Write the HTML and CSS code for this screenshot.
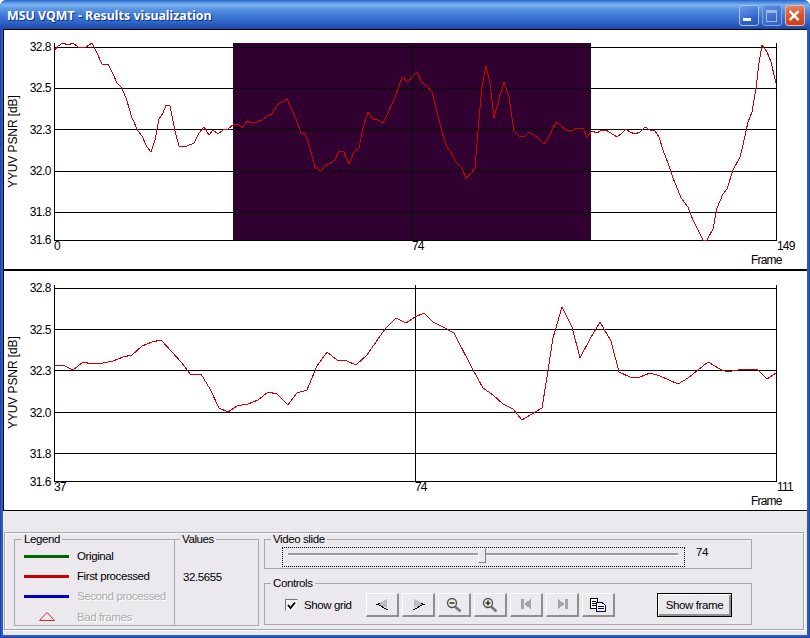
FILE: index.html
```html
<!DOCTYPE html>
<html lang="en">
<head>
<meta charset="utf-8">
<title>MSU VQMT - Results visualization</title>
<link rel="stylesheet" href="styles.css">
</head>
<body>
<div class="window">
  <header class="titlebar">
    <span class="title">MSU VQMT - Results visualization</span>
    <div class="caption-buttons">
      <span class="cap cap-min"><i class="min-bar"></i></span>
      <span class="cap cap-max"><i class="max-box"></i></span>
      <span class="cap cap-close">
        <svg width="20" height="21" viewBox="0 0 20 21"><path d="M5 5.5 L15 15.5 M15 5.5 L5 15.5" class="close-x"/></svg>
      </span>
    </div>
  </header>
  <main class="charts">
    <svg class="chart" width="803" height="239" viewBox="4 30 803 239" shape-rendering="crispEdges">
      <rect class="sel" x="233" y="43" width="358" height="197.5"/>
      <path class="axis" d="M54 47.5H776 M54 88.5H776 M54 129.5H776 M54 171.5H776 M54 212.5H776 M54 240.5H777 M54.5 43V241 M776.5 43V241 M412.5 43V241"/>
      <polyline class="curve" points="54,51 58,46 63,43 68,45 73,43 78,47 86,47 92,43 97,53 102,64 108,64 113,74 117,83 122,88 127,101 132,118 138,131 142,136 147,147 151,152 155,140 159,119 163,113 166,105 170,106 175,131 179,146 187,146 194,143 199,133 204,127 209,135 213,130 218,134 223,130 228,129 234,124 238,124 242,128 247,121 252,123 257,122 262,120 267,116 272,114 277,105 282,102 287,99 296,119 301,133 305,133 310,148 315,167 321,171 325,166 330,163 335,160 339,151 344,152 349,164 354,152 359,148 363,128 368,112 373,119 378,120 383,123 388,113 393,102 398,89 402,77 408,82 412,77 417,72 422,83 427,86 432,92 437,112 442,132 447,147 452,154 456,162 462,168 466,179 471,173 475,168 478,130 482,87 486,66 490,83 494,118 499,99 504,82 509,97 514,131 519,136 524,137 529,132 534,135 539,139 544,144 549,137 553,128 557,122 562,127 568,131 573,130 577,128 583,128 587,137 592,131 597,133 602,130 606,130 617,137 621,134 626,129 630,132 635,134 640,132 645,127 650,130 655,131 659,137 663,150 668,163 673,178 678,190 681,198 688,207 693,220 698,230 703,240 707,240 713,229 717,208 723,194 727,189 733,170 740,157 743,145 748,122 752,112 756,88 759,63 762,45 767,52 771,62 776,83"/>
      <g class="ticks">
        <text x="51" y="51">32.8</text>
        <text x="51" y="92">32.5</text>
        <text x="51" y="134">32.3</text>
        <text x="51" y="175">32.0</text>
        <text x="51" y="216">31.8</text>
        <text x="51" y="244">31.6</text>
      </g>
      <text class="ylabel" transform="translate(17 188) rotate(-90)">YYUV PSNR [dB]</text>
      <g class="xticks">
        <text x="54" y="250">0</text>
        <text x="412" y="250">74</text>
        <text x="777" y="250">149</text>
        <text x="751" y="264">Frame</text>
      </g>
    </svg>
    <div class="divider"></div>
    <svg class="chart" width="803" height="239" viewBox="4 271 803 239" shape-rendering="crispEdges">
      <path class="axis" d="M54 288.5H776 M54 329.5H776 M54 370.5H776 M54 412.5H776 M54 453.5H776 M54 481.5H777 M54.5 285V482 M776.5 285V482 M415.5 285V482"/>
      <polyline class="curve" points="54,365 63,365 73,370 83,362 92,364 103,363 113,361 123,357 132,355 142,346 152,342 161,340 172,352 182,363 190,374 201,374 210,389 219,408 228,412 237,406 248,404 258,400 268,392 277,394 288,405 297,393 307,390 317,366 327,352 337,360 347,361 356,365 367,355 385,329 396,318 406,323 415,317 424,313 433,322 443,327 454,333 472,368 483,388 493,395 503,404 513,409 522,420 530,415 542,408 547,377 553,338 562,307 572,327 580,358 590,339 600,322 611,341 619,372 630,377 640,377 650,373 660,376 678,384 688,378 698,370 708,362 720,369 727,372 743,369 757,369 767,379 776,373"/>
      <g class="ticks">
        <text x="51" y="292">32.8</text>
        <text x="51" y="334">32.5</text>
        <text x="51" y="375">32.3</text>
        <text x="51" y="417">32.0</text>
        <text x="51" y="458">31.8</text>
        <text x="51" y="486">31.6</text>
      </g>
      <text class="ylabel" transform="translate(17 429) rotate(-90)">YYUV PSNR [dB]</text>
      <g class="xticks">
        <text x="54" y="491">37</text>
        <text x="415" y="491">74</text>
        <text x="777" y="491">111</text>
        <text x="751" y="505">Frame</text>
      </g>
    </svg>
  </main>
  <section class="panel">
    <div class="outer-box">
      <fieldset class="group group-legend">
        <legend>Legend</legend>
        <div class="legend-row"><span class="swatch"><i class="line line-green"></i></span><span>Original</span></div>
        <div class="legend-row"><span class="swatch"><i class="line line-red"></i></span><span>First processed</span></div>
        <div class="legend-row disabled"><span class="swatch"><i class="line line-blue"></i></span><span>Second processed</span></div>
        <div class="legend-row disabled"><span class="swatch"><svg width="16" height="10" viewBox="0 0 16 10"><path class="tri" d="M8 .5 L15.5 8.5 H.5 Z"/></svg></span><span>Bad frames</span></div>
      </fieldset>
      <fieldset class="group group-values">
        <legend>Values</legend>
        <div class="value">32.5655</div>
      </fieldset>
      <div class="right-col">
        <fieldset class="group group-video">
          <legend>Video slide</legend>
          <div class="video-row">
            <div class="slider">
              <div class="track"></div>
              <div class="thumb"></div>
            </div>
            <span class="slide-value">74</span>
          </div>
        </fieldset>
        <fieldset class="group group-controls">
          <legend>Controls</legend>
          <div class="controls-row">
            <label class="check">
              <span class="box"><svg width="9" height="9" viewBox="0 0 9 9"><path class="tick" d="M1 4 L3.5 7 L8 1.5"/></svg></span>
              <span>Show grid</span>
            </label>
            <div class="tools">
              <button class="tool" type="button" aria-label="Previous">
                <svg width="13" height="11" viewBox="0 0 13 11" shape-rendering="crispEdges"><path class="arr-fill" d="M1 5 L11 0 V9 Z"/><path class="arr-edge" d="M0 5.5 H2 L11 10.5 H12 M2 4.5 H4"/></svg>
              </button>
              <button class="tool" type="button" aria-label="Next">
                <svg width="13" height="11" viewBox="0 0 13 11" shape-rendering="crispEdges"><path class="arr-fill" d="M12 5 L2 0 V9 Z"/><path class="arr-edge" d="M13 5.5 H11 L2 10.5 H1 M11 4.5 H9"/></svg>
              </button>
              <button class="tool" type="button" aria-label="Zoom out">
                <svg width="16" height="16" viewBox="0 0 16 16"><path class="mag-handle" d="M9 9.5 L14.5 14.5"/><circle class="mag" cx="6" cy="6" r="4.5"/><path class="mag-sign" d="M3.5 6 H8.5"/></svg>
              </button>
              <button class="tool" type="button" aria-label="Zoom in">
                <svg width="16" height="16" viewBox="0 0 16 16"><path class="mag-handle" d="M9 9.5 L14.5 14.5"/><circle class="mag" cx="6" cy="6" r="4.5"/><path class="mag-sign" d="M3.5 6 H8.5 M6 3.5 V8.5"/></svg>
              </button>
              <button class="tool" type="button" aria-label="First" disabled>
                <svg width="11" height="11" viewBox="0 0 11 11" shape-rendering="crispEdges"><path class="dis" d="M0 0 H3 V10 H0 Z M3 5 L10 0 V10 Z"/></svg>
              </button>
              <button class="tool" type="button" aria-label="Last" disabled>
                <svg width="11" height="11" viewBox="0 0 11 11" shape-rendering="crispEdges"><path class="dis" d="M8 0 H11 V10 H8 Z M8 5 L1 0 V10 Z"/></svg>
              </button>
              <button class="tool" type="button" aria-label="Copy">
                <svg width="16" height="14" viewBox="0 0 16 14" shape-rendering="crispEdges"><path class="doc-back" d="M.5 .5 H7.5 V10.5 H.5 Z"/><path class="doc-lines" d="M2 3.5 H6 M2 5.5 H6 M2 7.5 H6"/><path class="doc-front" d="M6.5 4.5 H12 L15.5 7.5 V13.5 H6.5 Z"/><path class="doc-lines-b" d="M8 8.5 H14 M8 10.5 H14"/></svg>
              </button>
            </div>
            <button class="show-frame" type="button">Show frame</button>
          </div>
        </fieldset>
      </div>
    </div>
  </section>
</div>
</body>
</html>
```
FILE: styles.css
```css
* { box-sizing: border-box; }
html, body { margin: 0; padding: 0; background: #fff; }
body { width: 810px; height: 638px; overflow: hidden; font: 11.5px/13px "Liberation Sans", Arial, sans-serif; letter-spacing: -0.4px; color: #000; }

.window {
  width: 810px; height: 638px;
  display: flex; flex-direction: column;
  background: #2a5cc4;
  border-radius: 7px 7px 0 0;
  overflow: hidden;
  padding: 0 3px 3px;
  box-shadow: inset 1px 0 #1c46a8, inset -1px 0 #1c46a8, inset 0 -1px #1c46a8;
}

.titlebar {
  flex: none; height: 29px;
  margin: 0 -3px;
  display: flex; align-items: flex-start;
  padding: 0 5px 0 7px;
  background: linear-gradient(180deg, #2b63c8 0, #4a8ae0 2px, #7db4ee 5px, #5b96e4 9px, #3f7bd8 15px, #2f66c8 22px, #2150b4 27px, #1d47a8 29px);
}
.title {
  font: bold 12.4px/17px "Noto Sans", sans-serif;
  letter-spacing: 0;
  color: #fff;
  padding-top: 7px;
  text-shadow: 1px 1px 0 #0f2f80;
  white-space: nowrap;
}
.caption-buttons { margin-left: auto; margin-top: 5px; display: flex; gap: 3px; }
.cap {
  width: 20px; height: 21px; border-radius: 3px;
  display: flex; position: relative;
  border: 1px solid #a9c3ee;
}
.cap-min { background: linear-gradient(160deg, #6f9ce8, #2f60c8 70%, #2a55b8); }
.cap-max { background: linear-gradient(160deg, #5c8ddc, #3a6cc8 70%, #3562c0); border-color: #7fa2de; }
.cap-close { background: linear-gradient(170deg, #e88a6c, #d9502a 55%, #c83e1c); border-color: #eeb9a4; }
.min-bar { width: 8px; height: 3px; background: #fff; margin: 12px 0 0 3px; }
.max-box { width: 11px; height: 12px; border: 1px solid #9ab8e8; border-top-width: 3px; margin: 4px 0 0 3px; }
.close-x { stroke: #fff; stroke-width: 2.6; fill: none; transform: translate(-1px, -1px); }

.charts {
  flex: none; height: 482px;
  background: #000;
  padding: 1px 0 1px 1px;
  display: flex; flex-direction: column;
}
.chart { display: block; background: #fff; flex: none; }
.divider { flex: none; height: 2px; background: #000; }
.sel { fill: #300030; }
.axis { stroke: #000; stroke-width: 1; fill: none; }
.curve { stroke: #d00000; stroke-width: 1; fill: none; }
.chart text { font: 12px "Liberation Sans", Arial, sans-serif; letter-spacing: -0.5px; fill: #000; }
.ticks text { text-anchor: end; }
.chart .xticks text { letter-spacing: -0.8px; }
.chart .ylabel { font-size: 12px; letter-spacing: -0.1px; }

.panel { flex: none; height: 124px; background: #ebe9ed; padding: 21px 0 0 1px; }
.outer-box {
  width: 800px; height: 98px;
  border: 1px solid #a9a8ab;
  box-shadow: inset 1px 1px #fff, 1px 1px #fff;
  display: flex; align-items: flex-start;
  padding-left: 9px;
}
.group {
  margin: 0; min-width: 0;
  border: 1px solid #a9a8ab;
  flex: none;
}
.group legend { padding: 0 2px; line-height: 13px; }
.group-legend { width: 161px; height: 93px; padding: 0 0 0 9px; }
.group-legend legend { margin-left: -2px; }
.group-values { width: 85px; height: 93px; margin-left: -1px; padding: 0 0 0 8px; }
.group-values legend { margin-left: -3px; }
.legend-row { display: flex; align-items: center; height: 20.4px; gap: 8px; white-space: nowrap; }
.swatch { width: 45px; display: flex; justify-content: center; align-items: center; }
.line { display: block; width: 45px; height: 3px; }
.line-green { background: #006400; }
.line-red { background: #c80000; }
.line-blue { background: #0000c8; }
.tri { fill: none; stroke: #c03030; stroke-width: 1; }
.disabled { color: #acabae; text-shadow: 1px 1px 0 #fff; }
.value { padding-top: 21px; line-height: 20px; }

.right-col { margin-left: 5px; display: flex; flex-direction: column; gap: 8px; width: 488px; }
.group-video { height: 36px; padding: 1px 0 0 8px; }
.group-video legend { margin-left: -2px; }
.group-controls { height: 48px; padding: 3px 0 0 8px; }
.group-controls legend { margin-left: -2px; }
.video-row { display: flex; align-items: flex-start; }
.slider {
  position: relative;
  margin-left: 9px; width: 403px; height: 20px;
  border: 1px dotted #000;
  padding: 5px 6px 0 5px;
}
.track { height: 3px; background: #9a999c; border-bottom: 1px solid #fff; }
.thumb {
  position: absolute; left: 195px; top: 0;
  width: 8px; height: 15px;
  background: #ebe9ed;
  border: 1px solid; border-color: #fff #808080 #808080 #fff;
}
.slide-value { margin-left: 11px; line-height: 10px; }

.controls-row { display: flex; align-items: flex-start; }
.check { margin-left: 12px; width: 81px; height: 24px; display: flex; align-items: center; gap: 6px; white-space: nowrap; }
.box {
  width: 13px; height: 12px; display: flex; align-items: center; justify-content: center;
  background: #f4f3f5;
  border: 1px solid; border-color: #77767a #e8e8e8 #e8e8e8 #77767a;
}
.tick { fill: none; stroke: #000; stroke-width: 1.8; }
.tools { display: flex; gap: 3px; }
.tool {
  width: 33px; height: 24px; padding: 0; margin: 0;
  display: flex; align-items: center; justify-content: center;
  background: #ebe9ed;
  border-style: solid; border-width: 1px 2px 2px 1px;
  border-color: #fff #8f8e91 #8f8e91 #fff;
  border-radius: 0;
}
.arr-fill { fill: #bdbcc0; }
.arr-edge { stroke: #000; stroke-width: 1; fill: none; }
.mag { fill: #eee9d8; stroke: #55545a; stroke-width: 1.3; }
.mag-handle { stroke: #77767c; stroke-width: 2.6; fill: none; }
.mag-sign { stroke: #000; stroke-width: 1.2; fill: none; }
.dis { fill: #a5a4a8; }
.doc-back { fill: #fff; stroke: #000; }
.doc-lines { stroke: #000; fill: none; }
.doc-front { fill: #fff; stroke: #00007a; }
.doc-lines-b { stroke: #00007a; fill: none; }
.show-frame {
  margin: 0 0 0 42px; padding: 0;
  width: 75px; height: 24px;
  font: 11.5px "Liberation Sans", Arial, sans-serif;
  letter-spacing: -0.4px;
  color: #000;
  background: #ebe9ed;
  border: 1px solid #000;
  box-shadow: inset 1px 1px #fff, inset -2px -2px #8f8e91;
  border-radius: 0;
}
```
